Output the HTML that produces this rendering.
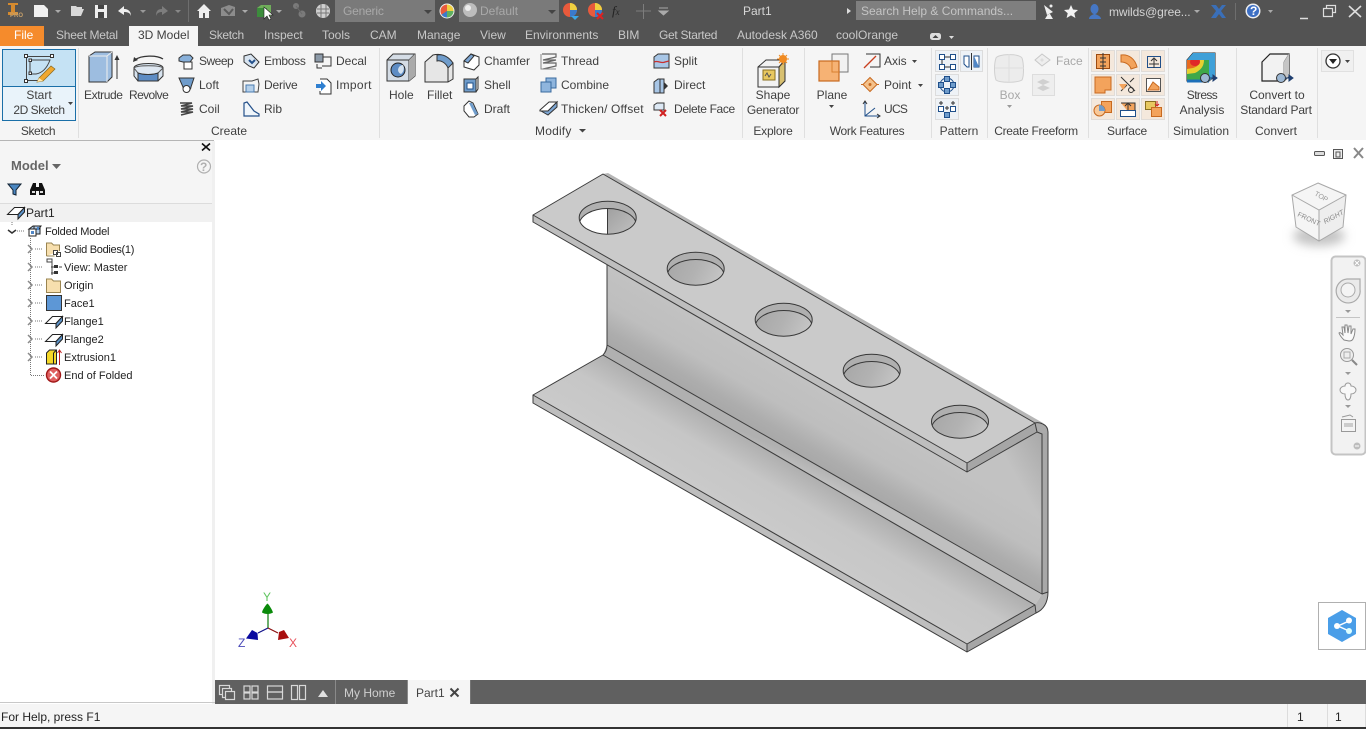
<!DOCTYPE html>
<html><head><meta charset="utf-8"><title>Part1</title>
<style>
html,body{margin:0;padding:0;width:1366px;height:729px;overflow:hidden;background:#fff}
body{position:relative;font:12px/14px "Liberation Sans",sans-serif;color:#3f3f3f}
.b{position:absolute}
.t{position:absolute;white-space:nowrap;line-height:14px}
.c{transform:translateX(-50%)}
.q{color:#a9a9a9}.w{color:#c8c8c8}.d{color:#b4b4b4}
.r{color:#222;font-size:11px}
svg{position:absolute;left:0;top:0}
</style></head><body>
<!-- chrome blocks -->
<div class="b" style="left:0;top:0;width:1366px;height:46px;background:#535353"></div>
<div class="b" style="left:335px;top:0;width:100px;height:22px;background:#7a7a7a"></div>
<div class="b" style="left:459px;top:0;width:100px;height:22px;background:#7a7a7a"></div>
<div class="b" style="left:856px;top:1px;width:180px;height:19px;background:#7f7f7f"></div>
<div class="b" style="left:0;top:26px;width:44px;height:20px;background:#f58b2c"></div>
<div class="b" style="left:129px;top:26px;width:69px;height:20px;background:#f5f5f5"></div>
<div class="b" style="left:0;top:46px;width:1366px;height:94px;background:#f5f5f5"></div>
<div class="b" style="left:0;top:140px;width:214px;height:1px;background:#b5b5b5"></div>
<div class="b" style="left:0;top:141px;width:212px;height:63px;background:#f5f5f5"></div>
<div class="b" style="left:0;top:203px;width:212px;height:1px;background:#dcdcdc"></div>
<div class="b" style="left:0;top:204px;width:212px;height:18px;background:#f1f1f1"></div>
<div class="b" style="left:212px;top:141px;width:3px;height:563px;background:#f0f0f0"></div>
<div class="b" style="left:0;top:702px;width:215px;height:1px;background:#c8c8c8"></div>
<div class="b" style="left:215px;top:680px;width:1151px;height:24px;background:#606060"></div>
<div class="b" style="left:408px;top:680px;width:62px;height:24px;background:#f5f5f5"></div>
<div class="b" style="left:0;top:704px;width:1366px;height:23px;background:#f5f5f5"></div>
<div class="b" style="left:0;top:727px;width:1366px;height:2px;background:#333"></div>

<svg width="1366" height="729" viewBox="0 0 1366 729" fill="none">
<defs>
<linearGradient id="web" gradientUnits="userSpaceOnUse" x1="800" y1="376" x2="765.5" y2="436">
<stop offset="0" stop-color="#c2c2c2"/><stop offset=".5" stop-color="#bebebe"/><stop offset=".82" stop-color="#adadad"/><stop offset="1" stop-color="#a8a8a8"/></linearGradient>
<linearGradient id="bend" gradientUnits="userSpaceOnUse" x1="800" y1="456" x2="794" y2="470">
<stop offset="0" stop-color="#b0b0b0"/><stop offset="1" stop-color="#c0c0c0"/></linearGradient>
<linearGradient id="flg" gradientUnits="userSpaceOnUse" x1="800" y1="470" x2="765" y2="530">
<stop offset="0" stop-color="#b0b0b0"/><stop offset=".4" stop-color="#c6c6c6"/><stop offset="1" stop-color="#cacaca"/></linearGradient>
<linearGradient id="webr" gradientUnits="userSpaceOnUse" x1="1040" y1="438" x2="1005" y2="458">
<stop offset="0" stop-color="#000" stop-opacity=".12"/><stop offset="1" stop-color="#000" stop-opacity="0"/></linearGradient>
<linearGradient id="hole" x1="0" y1="0" x2="1" y2=".3"><stop offset="0" stop-color="#a6a6a6"/><stop offset=".55" stop-color="#b2b2b2"/><stop offset="1" stop-color="#c4c4c4"/></linearGradient>
<linearGradient id="hole2" x1="0" y1="0" x2="1" y2="1"><stop offset="0" stop-color="#a0a0a0"/><stop offset="1" stop-color="#c2c2c2"/></linearGradient>
<filter id="bl" x="-40%" y="-60%" width="180%" height="220%"><feGaussianBlur stdDeviation="5"/></filter>
<clipPath id="hc1"><ellipse cx="607.7" cy="217.7" rx="28.5" ry="16.5"/></clipPath>
<clipPath id="hc2"><ellipse cx="695.7" cy="268.7" rx="28.5" ry="16.5"/></clipPath>
<clipPath id="hc3"><ellipse cx="783.7" cy="319.7" rx="28.5" ry="16.5"/></clipPath>
<clipPath id="hc4"><ellipse cx="871.7" cy="370.7" rx="28.5" ry="16.5"/></clipPath>
<clipPath id="hc5"><ellipse cx="960" cy="421.7" rx="28.5" ry="16.5"/></clipPath>
<g id="fl"><path d="M.5 8.500 7.500 1.500H17.500L11 8.500z" fill="#fff" stroke="#222"/><path d="M17.500 1.500V6L11 13V8.500z" fill="#5d93c9" stroke="#222"/></g>
<g id="car"><path d="M0 0h6l-3 3z" fill="currentColor"/></g>
</defs>

<!-- PART -->
<g stroke-linejoin="round">
<path d="M607 262 1043 430V594L607 345z" fill="url(#web)"/>
<path d="M607 262 1043 430V594L607 345z" fill="url(#webr)"/>
<path d="M607 345 1042 594 1035 605 603 355z" fill="url(#bend)"/>
<path d="M533 395 603 355 1035 605 967 644z" fill="url(#flg)"/>
<path d="M533 395 967 644V652L533 403z" fill="#bebebe"/>
<path d="M967 644 1035 605 1036 613 967 652z" fill="#a6a6a6"/>
<path d="M1035 605 1042 594 1048 592C1048 604 1043 610 1036 613z" fill="#b4b4b4"/>
<path d="M1042 432H1048V592L1042 594z" fill="#a8a8a8"/>
<path d="M603 174 608 173 1043 423 1035 423z" fill="#b6b6b6"/>
<path d="M533 215 603 174 1035 423 967 463z" fill="#cacaca"/>
<path d="M533 215 967 463V472L533 222z" fill="#bebebe"/>
<path d="M967 463 1035 423 1037 432 967 472z" fill="#a6a6a6"/>
<path d="M1035 423C1038 422 1041 423 1043 424 1047 426 1048 429 1048 432L1042 434 1037 432z" fill="#aaa"/>
<!-- holes -->
<g clip-path="url(#hc1)"><rect x="575" y="198" width="64" height="40" fill="#b0b0b0"/><ellipse cx="607.7" cy="225" rx="28.5" ry="16.5" fill="#fff"/><path d="M607.500 208.500A28.500 16.500 0 0 1 636 225V236H607.500z" fill="url(#hole2)"/></g>
<g stroke="#383838" stroke-width="1">
<ellipse cx="607.7" cy="217.7" rx="28.5" ry="16.5"/>
<g clip-path="url(#hc1)"><ellipse cx="607.7" cy="225" rx="28.5" ry="16.5"/></g>
<path d="M607.500 209V234"/>
</g>
<g><ellipse cx="695.7" cy="268.7" rx="28.5" ry="16.5" fill="#afafaf"/><g clip-path="url(#hc2)"><ellipse cx="695.7" cy="276" rx="28.5" ry="16.5" fill="url(#hole)" stroke="#383838"/></g><ellipse cx="695.7" cy="268.7" rx="28.5" ry="16.5" stroke="#383838"/></g>
<g><ellipse cx="783.7" cy="319.7" rx="28.5" ry="16.5" fill="#afafaf"/><g clip-path="url(#hc3)"><ellipse cx="783.7" cy="327" rx="28.5" ry="16.5" fill="url(#hole)" stroke="#383838"/></g><ellipse cx="783.7" cy="319.7" rx="28.5" ry="16.5" stroke="#383838"/></g>
<g><ellipse cx="871.7" cy="370.7" rx="28.5" ry="16.5" fill="#afafaf"/><g clip-path="url(#hc4)"><ellipse cx="871.7" cy="378" rx="28.5" ry="16.5" fill="url(#hole)" stroke="#383838"/></g><ellipse cx="871.7" cy="370.7" rx="28.5" ry="16.5" stroke="#383838"/></g>
<g><ellipse cx="960" cy="421.7" rx="28.5" ry="16.5" fill="#afafaf"/><g clip-path="url(#hc5)"><ellipse cx="960" cy="429" rx="28.5" ry="16.5" fill="url(#hole)" stroke="#383838"/></g><ellipse cx="960" cy="421.7" rx="28.5" ry="16.5" stroke="#383838"/></g>
<!-- edges -->
<g stroke="#3c3c3c" stroke-width="1">
<path d="M533 215 603 174 1035 423 967 463zM533 215V222L967 472V463M967 472 1037 432 1035 423"/>
<path d="M1035 423C1038 422 1041 423 1043 424 1047 426 1048 429 1048 432V592C1048 603 1043 610 1036 613L967 652V644L533 395V403L967 652"/>
<path d="M533 395 603 355 1035 605 967 644M1035 605 1036 613"/>
<path d="M607 265V345C607 350 605 353 603 355M607 345 1042 594V434L1037 432M1042 594 1048 592"/>
</g>
</g>

<!-- QAT -->
<path d="M8 3h10v2h-3v7h3v3H8v-3h3V5H8z" fill="#d58a2e"/>
<path d="M34 5h10l4 4v8H34z" fill="#f0f0f0"/>
<use href="#car" x="55" y="10" color="#aaa"/>
<path d="M71 9V6h5l1 1h5v2h2l-3 7H71z" fill="#d8d8d8"/>
<path d="M95 5h12v13H95z" fill="#eee"/><path d="M98 5h6v4h-6zM98 12h6v6h-6z" fill="#444"/>
<path d="M124 6 118 11l6 4v-3c4 0 6 1 7 4 0-4-2-7-7-7z" fill="#eee"/>
<use href="#car" x="140" y="10" color="#999"/>
<path d="M162 6 168 11l-6 4v-3c-3 0-5 1-6 4 0-4 1-7 6-7z" fill="#7d7d7d"/>
<use href="#car" x="175" y="10" color="#888"/>
<path d="M188.500 0V22" stroke="#6e6e6e"/>
<path d="M204 4 197 11h2v7h4v-5h2v5h4v-7h2z" fill="#eee"/>
<path d="M221 8l8-3 6 2v9h-14z" fill="#8c8c8c"/><path d="M224 9l5 5 4-5" stroke="#5a5a5a" stroke-width="2"/>
<use href="#car" x="242" y="10" color="#aaa"/>
<path d="M257 8l4-3h10v11h-14z" fill="#6fae5a"/><path d="M257 8h10v9h-10z" fill="#3c8c3c"/>
<path d="M264 7v12l3-3 2 4 2-1-2-4h4z" fill="#fff" stroke="#222" stroke-width=".6"/>
<use href="#car" x="276" y="10" color="#aaa"/>
<circle cx="296" cy="6" r="3" fill="#7a7a7a"/><circle cx="302" cy="14" r="3.500" fill="#7a7a7a"/><path d="M296 6 302 14" stroke="#6a6a6a"/>
<circle cx="323" cy="11" r="7" fill="#cfcfcf"/><path d="M317 9h12M317 13h12M321 4v14M326 4v14" stroke="#777"/>
<path d="M424 10h8l-4 4z" fill="#444"/><path d="M548 10h8l-4 4z" fill="#444"/>
<circle cx="447" cy="11" r="7" fill="#e85a3c"/><path d="M447 11V4a7 7 0 0 1 7 7z" fill="#f0d040"/><path d="M447 11h7a7 7 0 0 1-7 7z" fill="#60b060"/><path d="M447 11v7a7 7 0 0 1-6-3z" fill="#3a7acc"/><circle cx="447" cy="11" r="7" stroke="#eee"/>
<circle cx="470" cy="10" r="7" fill="#bdbdbd"/><circle cx="468" cy="8" r="3" fill="#eee"/>
<circle cx="570" cy="10" r="7" fill="#e85a3c"/><path d="M570 10V3a7 7 0 0 1 7 7z" fill="#f0d040"/><path d="M570 10h7a7 7 0 0 1-7 7z" fill="#3a7acc"/><path d="M571 16h8l-4 4z" fill="#3aa7e8"/>
<circle cx="595" cy="10" r="7" fill="#e85a3c"/><path d="M595 10V3a7 7 0 0 1 7 7z" fill="#f0d040"/><path d="M595 10h7a7 7 0 0 1-7 7z" fill="#3a7acc"/><path d="M597 13l6 6m0-6-6 6" stroke="#e02020" stroke-width="2"/>
<path d="M636 11h15M643.500 4v15" stroke="#7d7d7d"/>
<path d="M659 8h9M659 11h9l-4.500 4z" stroke="#aaa" fill="#aaa" stroke-width="1"/>
<path d="M847 8v6l4-3z" fill="#ddd"/>
<path d="M1044 5l9 7-6 3zM1048 14l-3 5h8l-3-5z" fill="#eee"/><circle cx="1051" cy="6" r="1.500" fill="#eee"/>
<path d="M1071 5l2 4.500 5 .5-3.700 3.200 1.100 4.800-4.400-2.600-4.400 2.600 1.100-4.800-3.700-3.200 5-.5z" fill="#f2f2f2"/>
<path d="M1089 19c0-3 3-4 5-5a4 5 0 1 1 1 0c2 1 6 2 6 5z" fill="#4677c4"/>
<path d="M1194 10h6l-3 3z" fill="#aaa"/>
<path d="M1211 5h5l3 4 3-4h4l-5 6 5 7h-4l-3-4-3 4h-5l5-7z" fill="#3a6fb8"/>
<path d="M1235.500 3V20" stroke="#6e6e6e"/>
<circle cx="1253" cy="11" r="7.500" fill="#f0f0f0"/><circle cx="1253" cy="11" r="6" fill="#3d6fc4"/>
<path d="M1268 10h5l-2.500 3z" fill="#aaa"/>
<path d="M1300 18.500h8" stroke="#ddd" stroke-width="1.500"/>
<path d="M1323.500 8.500h9v8h-9zM1326.500 8.500V5.500h9v7h-3" stroke="#ddd" stroke-width="1.200"/>
<path d="M1349 6l12 11m0-11-12 11" stroke="#ddd" stroke-width="1.600"/>
<rect x="930" y="33" width="11" height="7" rx="2.500" fill="#ddd"/><path d="M932.500 38h6l-3-3z" fill="#444"/>
<path d="M949 36h5l-2.500 3z" fill="#ddd"/>

<!-- Start 2D sketch -->
<rect x="2.500" y="49.500" width="73" height="71" fill="#e9f3fa" stroke="#1a6fa8"/>
<rect x="3" y="50" width="72" height="36" fill="#c5e2f4"/>
<path d="M2 86.500h74" stroke="#1a6fa8"/>
<path d="M26.500 56.500h26M26.500 56.500v24M26.500 80.500h14" stroke="#444"/>
<path d="M30 60v14h6c6-1 11-6 14-14z" stroke="#444"/>
<g fill="#fff" stroke="#333"><rect x="24.500" y="54.500" width="3" height="3"/><rect x="50.500" y="54.500" width="3" height="3"/><rect x="24.500" y="79.500" width="3" height="3"/><rect x="29" y="59" width="2.500" height="2.500"/><rect x="29" y="72" width="2.500" height="2.500"/></g>
<path d="M39 78l12-12 4 3-12 12-6 1z" fill="#f0a830" stroke="#8a6a20" stroke-width=".7"/><path d="M37 82l2-4 4 3z" fill="#ffe8b0"/>
<path d="M68 102h5l-2.500 3z" fill="#444"/>
<!-- Extrude -->
<path d="M89 56l6-4h17v25l-5 5H89z" fill="#9dbde0" stroke="#333"/><path d="M89 56h18v26M107 56l5-4" stroke="#eee"/>
<path d="M117 79V58" stroke="#333"/><path d="M114.500 60l2.500-5 2.500 5z" fill="#333"/>
<!-- Revolve -->
<path d="M135 60c6-5 22-5 28-1" stroke="#333" stroke-width="1.300"/><path d="M133 62l1-5 4 3z" fill="#333"/>
<path d="M134 68c0-6 29-6 29 0v8l-5 5h-20l-4-5z" fill="#d8e4f0" stroke="#333"/>
<path d="M134 68c3-3 26-3 29 0l-5 5c-4 2-15 2-20 0z" fill="#dfe8f2" stroke="#555"/>
<path d="M138 73c5 2 15 2 20 0v8h-20z" fill="#5d8cc4" stroke="#333"/>
<!-- small left icons -->
<path d="M179 58l4-3h7l3 3-3 4h-7l-4-1z" fill="#88b0da" stroke="#333"/><path d="M184 62h8v7h-8z" fill="#fff" stroke="#333"/>
<path d="M179 78h15l-3 9a4 4 0 1 1-8 0z" fill="#6f9ccb" stroke="#333"/><circle cx="186.500" cy="89" r="3.500" fill="#fff" stroke="#333"/>
<path d="M180 103h12l-11 3h12l-12 3h12l-12 3h12l-12 3" stroke="#444" stroke-width="1.500"/>
<path d="M244 56l7-2 8 8-5 6-5-2-5-4z" fill="#d8e4f0" stroke="#333"/><path d="M249 60l3 3 3-3" stroke="#24508a" stroke-width="2"/>
<path d="M243 81h9l6-2 1 5-1 8h-15z" fill="#f4f4f4" stroke="#444"/><rect x="246" y="85" width="8" height="7" fill="#b5d0ea" stroke="#4a7bb0"/>
<path d="M244 116V103l3-1 7 9 5 3 0 2z" fill="#f0f6fb" stroke="#24508a" stroke-width="1.200"/>
<rect x="315" y="54" width="8" height="8" fill="#8c9aa8" stroke="#333"/><path d="M323 57h8v9h-9M317 64v4h5" stroke="#333"/>
<path d="M320 79h7l4 4v11h-11v-3" fill="#fff" stroke="#333"/><path d="M316 84h5v-3l5 5-5 5v-3h-5z" fill="#2f7fd0"/>
<!-- Hole -->
<path d="M387 60l6-6h22v22l-6 5h-22z" fill="#d5dde6" stroke="#333"/><path d="M387 60h22v21M409 60l6-6" stroke="#333"/><path d="M409 60l6-6v22l-6 5z" fill="#aaa"/>
<circle cx="398" cy="70" r="7" fill="#5d8cc4" stroke="#222"/><path d="M398 70a5 5 0 0 1 5-5 7 7 0 0 1-2 9 5 5 0 0 1-3-4z" fill="#d4e2f0"/>
<!-- Fillet -->
<path d="M425 62l8-7c8-2 12 0 20 8v16l-5 3h-23z" fill="#e6e6e6" stroke="#333"/>
<path d="M437 55c6-1 11 1 16 8l-5 5c-2-5-7-8-11-7z" fill="#6f9ccb" stroke="#333"/><path d="M448 68v14M453 63v16" stroke="#333"/>
<!-- modify column -->
<path d="M464 61l7-7 8 3v8l-5 5-10-3z" fill="#fff" stroke="#333"/><path d="M464 61l7-7 3 2-6 7z" fill="#7ea7d4" stroke="#333"/>
<rect x="464" y="79" width="12" height="13" fill="#6f9ccb" stroke="#333"/><rect x="467" y="83" width="6" height="6" fill="#fff" stroke="#1f4f8a"/><path d="M476 79l2-2v12l-2 3" stroke="#333"/>
<path d="M464 106l5-5 4 2 5 11-4 3h-5l-5-6z" fill="#fff" stroke="#333"/><path d="M469 103l6 12 3-1-6-11z" fill="#6f9ccb"/>
<path d="M542 54h14v3l-13 3h13l-13 3h13v3l-13 3" stroke="#666" stroke-width="1.200"/><path d="M541 54v15h15" stroke="#888"/>
<rect x="546" y="78" width="10" height="10" fill="#8fb5dd" stroke="#3a6a9f"/><rect x="541" y="82" width="10" height="10" fill="#8fb5dd" stroke="#3a6a9f"/>
<path d="M540 110l9-8h8l-9 9h-8z" fill="#fff" stroke="#333"/><path d="M541 111l7 4 9-8v-5l-9 9z" fill="#7ea7d4" stroke="#333"/>
<path d="M654 57l4-3h11v14h-15z" fill="#a8c6e6" stroke="#333"/><path d="M654 62c4-2 7 2 11 0l4-1" stroke="#c83030" stroke-width="1.300"/>
<path d="M654 82l4-3h6v14h-10z" fill="#a8c6e6" stroke="#333"/><path d="M660 79v14" stroke="#333"/><path d="M664 82l4 4-4 4z" fill="#333"/>
<path d="M654 105l3-2h7v7h-10z" fill="#dce8f4" stroke="#333"/><path d="M660 110l6 6m0-6-6 6" stroke="#d02020" stroke-width="2"/>
<path d="M579 129h7l-3.500 3.500z" fill="#444"/>
<!-- Shape generator -->
<path d="M758 67l8-7h19v21l-6 6h-21z" fill="#f2f2f2" stroke="#333"/><path d="M758 67h21v20M779 67l6-7" stroke="#333"/>
<rect x="763" y="70" width="12" height="10" fill="#e8c860" stroke="#8a7020"/><path d="M765 76l2-3 2 4 2-3" stroke="#555"/><path d="M779 67l6-7v21l-6 6z" fill="#d8c070" stroke="#333"/>
<circle cx="783" cy="59" r="4" fill="#f08a20"/><path d="M783 53v12M777 59h12M779 55l8 8M787 55l-8 8" stroke="#f08a20"/>
<!-- Plane -->
<rect x="832" y="54" width="16" height="18" fill="#f2f2f2" stroke="#777"/>
<rect x="819" y="61" width="20" height="20" fill="#f6b274" stroke="#c86a20" stroke-width="1.200"/>
<path d="M832 61v11h7" stroke="#d88030"/>
<path d="M829 105h5l-2.500 3z" fill="#444"/>
<!-- work features -->
<path d="M866 54h14v13h-10" stroke="#333"/><path d="M864 68l12-12" stroke="#c84020" stroke-width="1.300"/>
<path d="M912 60h5l-2.500 3z" fill="#444"/>
<path d="M863 84.500l7-7 7 7-7 7z" fill="#f4c18a" stroke="#c86a20"/><circle cx="870" cy="84.500" r="1.500" fill="#c86a20"/><path d="M863 84.500h-2M877 84.500h2" stroke="#c86a20"/>
<path d="M918 84h5l-2.500 3z" fill="#444"/>
<path d="M865 102v14h14M865 116l10-8" stroke="#1f4f8a"/><path d="M863 104l2-3 2 3M877 114l3 2-3 2" stroke="#333"/>
<!-- pattern -->
<g stroke="#dcdcdc" fill="#eef2f6"><rect x="935.500" y="50.500" width="23" height="21"/><rect x="960.500" y="50.500" width="22" height="21"/><rect x="935.500" y="74.500" width="23" height="21"/><rect x="935.500" y="98.500" width="23" height="21"/></g>
<g stroke="#1f4f8a" fill="#fff"><rect x="939.500" y="54.500" width="5" height="5"/><rect x="950.500" y="54.500" width="5" height="5"/><rect x="939.500" y="64.500" width="5" height="5"/><rect x="950.500" y="64.500" width="5" height="5"/></g>
<path d="M944.500 57h6M942 60v4M944.500 67h6" stroke="#333"/>
<path d="M971.500 53v17" stroke="#333"/><path d="M964 56h5v11h-2l-3-3zM974 56l5 0v11h-5z" stroke="#1f4f8a" fill="#fff"/><path d="M974 56l5 11h-5z" fill="#4f86c6"/>
<circle cx="947" cy="85" r="7" stroke="#1f4f8a"/><g fill="#6f9ccb" stroke="#1f4f8a"><rect x="944.500" y="76.500" width="5" height="5"/><rect x="944.500" y="88.500" width="5" height="5"/><rect x="938.500" y="82.500" width="5" height="5"/><rect x="950.500" y="82.500" width="5" height="5"/></g>
<g stroke="#1f4f8a" fill="#fff"><rect x="938.500" y="106.500" width="5" height="5"/><rect x="950.500" y="106.500" width="5" height="5"/><rect x="944.500" y="112.500" width="5" height="5" fill="#6f9ccb"/></g><path d="M941 101v4M939 103h4M953 101v4M951 103h4M947 106v4M945 108h4" stroke="#333"/>
<!-- freeform -->
<path d="M996 58c2-4 22-5 26 0 2 6 2 18 0 22-5 3-22 3-26 0-2-6-2-16 0-22z" fill="#ececec" stroke="#d0d0d0"/><path d="M1009 54v28M995 68h29" stroke="#dedede"/>
<path d="M1007 105h5l-2.500 3z" fill="#9a9a9a"/>
<path d="M1035 60l7-6 8 6-8 6z" stroke="#c8c8c8" fill="#eee"/><path d="M1040 60l2-2 2 2-2 2z" fill="#ddd"/>
<rect x="1032.500" y="74.500" width="22" height="21" fill="#eee" stroke="#ddd"/><path d="M1037 82l6-3 7 3-7 3zM1037 88l6-3 7 3-7 3z" fill="#d0d0d0"/>
<!-- surface -->
<g fill="#f4e8dc" stroke="#e0dcd8"><rect x="1091.500" y="50.500" width="23" height="21"/><rect x="1116.500" y="50.500" width="23" height="21"/><rect x="1141.500" y="50.500" width="23" height="21"/><rect x="1091.500" y="74.500" width="23" height="21"/><rect x="1116.500" y="74.500" width="23" height="21"/><rect x="1141.500" y="74.500" width="23" height="21"/><rect x="1091.500" y="98.500" width="23" height="21"/><rect x="1116.500" y="98.500" width="23" height="21"/><rect x="1141.500" y="98.500" width="23" height="21"/></g>
<rect x="1096.500" y="54.500" width="13" height="14" fill="#f3a35c" stroke="#9c4a10"/><path d="M1103 53v17M1100 58h6M1100 62h6M1100 66h6" stroke="#333"/>
<path d="M1121 55c8-1 14 4 16 12l-6 2c-1-4-5-7-10-7z" fill="#f3a35c" stroke="#c86a20"/>
<rect x="1147.500" y="56.500" width="13" height="11" fill="none" stroke="#1f4f8a"/><path d="M1154 68v-9M1151 61l3-3 3 3M1149 64h10" stroke="#333"/>
<path d="M1095 77h16v13h-6v3h-10z" fill="#f3a35c" stroke="#c86a20"/>
<path d="M1121 77l14 14M1121 91l6-6m3-3 4-4" stroke="#333"/><circle cx="1131" cy="90" r="2.500" stroke="#333"/><path d="M1119 84h8l-4 6z" fill="#f3a35c"/>
<rect x="1146.500" y="78.500" width="14" height="13" stroke="#555" fill="#fff"/><path d="M1148 90l5-8 6 5v3z" fill="#f3a35c" stroke="#c86a20"/>
<rect x="1101.500" y="101.500" width="10" height="11" fill="#f3a35c" stroke="#c86a20"/><circle cx="1099.500" cy="110.500" r="5.500" fill="#f8c898" stroke="#c86a20"/><path d="M1099 105a5.500 5.500 0 0 1 6 6h-6z" fill="#6f9ccb"/>
<path d="M1121 103h14v11h-5M1128 112v-8M1125 106l3-3 3 3" stroke="#333" fill="#f3a35c"/><rect x="1120.500" y="110.500" width="15" height="6" fill="#fff" stroke="#1f4f8a"/>
<rect x="1145.500" y="101.500" width="10" height="8" fill="#e8c860" stroke="#8a7020"/><rect x="1151.500" y="107.500" width="10" height="9" fill="#f3a35c" stroke="#c86a20"/><path d="M1157 101v5M1155 104l2 2 2-2" stroke="#d02020"/>
<!-- stress -->
<path d="M1187 60l6-7h22v23l-6 5h-22z" fill="#1c6fb8" stroke="#222"/>
<path d="M1187 60h22v21h-22z" fill="#3ea84a"/><path d="M1187 60h17c0 6-3 10-9 13l-8 1z" fill="#e8d030"/><path d="M1187 60h13c0 4-3 7-7 8l-6 1z" fill="#e86a20"/><ellipse cx="1195" cy="62" rx="5" ry="4" fill="#e02828"/>
<path d="M1209 60l6-7v23l-6 5zM1193 53h22l-6 7h-22z" fill="#3fa0d8"/><path d="M1187 81h22" stroke="#1c6fb8" stroke-width="3"/>
<circle cx="1205" cy="78" r="4.500" fill="#9db8d4" stroke="#333"/><path d="M1209 78h6M1213 75l4 3-4 3z" fill="#1f3f70" stroke="#1f3f70"/>
<!-- convert -->
<path d="M1262 62l8-8h19v22l-5 5h-22z" fill="#f2f2f2" stroke="#222" stroke-width="1.200"/><path d="M1284 62v19M1284 62l5-8" stroke="#888"/><path d="M1284 62l5-8v22l-5 5z" fill="#c5c5c5"/>
<circle cx="1281" cy="78" r="4.500" fill="#9db8d4" stroke="#333"/><path d="M1285 78h6M1289 75l4 3-4 3z" fill="#1f3f70" stroke="#1f3f70"/>
<!-- end -->
<rect x="1321.500" y="50.500" width="32" height="21" fill="#f0f0f0" stroke="#e0e0e0"/>
<circle cx="1333" cy="61" r="7" stroke="#333" stroke-width="1.300" fill="#fff"/><path d="M1329 59h8l-4 5z" fill="#222"/><path d="M1345 60h5l-2.500 3z" fill="#444"/>
<!-- ribbon separators -->
<g stroke="#dfdfdf"><path d="M78.500 48V138M379.500 48V138M742.500 48V138M804.500 48V138M931.500 48V138M987.500 48V138M1088.500 48V138M1168.500 48V138M1236.500 48V138M1317.500 48V138"/></g>

<!-- Browser -->
<path d="M202 143.500l8 7m0-7-8 7" stroke="#111" stroke-width="1.600"/>
<path d="M52 164h9l-4.500 5z" fill="#666"/>
<circle cx="204" cy="166.500" r="6.500" stroke="#b0b0b0" stroke-width="1.200"/>
<path d="M8 184h13l-5 6v5l-3-1v-4z" fill="#4a86c0" stroke="#123" stroke-width="1"/>
<path d="M30 195v-5l3-7h3v4h3v-4h3l3 7v5h-6v-4h-3v4z" fill="#111"/><path d="M32 191h3v2h-3zM40 191h3v2h-3z" fill="#ddd"/>
<use href="#fl" x="7" y="206"/>
<!-- tree lines -->
<g stroke="#777" stroke-dasharray="1 1">
<path d="M30.500 238V375.500H44M35 249h8M35 267h8M35 285h8M35 303h8M35 321h8M35 339h8M35 357h8M17 231h8M12 222V226"/>
</g>
<g stroke-width="1.500"><path d="M8 230l4 3 4-3" stroke="#333"/><path d="M28 245l4 4-4 4M28 263l4 4-4 4M28 281l4 4-4 4M28 299l4 4-4 4M28 317l4 4-4 4M28 335l4 4-4 4M28 353l4 4-4 4" stroke="#8a8a8a"/></g>
<path d="M29 229l4-3h7v8h-9v-5zM34 226h7l-2 3h-5z" fill="#b6cfe8" stroke="#222"/><path d="M29 229h7v7h-7z" fill="#fff" stroke="#222"/><path d="M31 231h3v3h-3zM37 227h2v3h-2z" fill="#4f86c6"/>
<path d="M46.500 256V243h5l2 2h6v6" fill="#f7dfae" stroke="#9a8450"/><path d="M46.500 256h8" stroke="#9a8450"/><rect x="53.500" y="250.500" width="4" height="4" stroke="#444" fill="#fff"/><rect x="56.500" y="252.500" width="4" height="4" stroke="#444"/>
<path d="M47 259h5v3h-5zM51 267h3M51 273h3M52 262v13" stroke="#444"/><rect x="54" y="265" width="4" height="3" fill="#333"/><rect x="54" y="271" width="4" height="3" fill="#333"/><path d="M59 267h3" stroke="#444"/>
<path d="M46.500 292.500V279h5l2 2h7v11.500z" fill="#f7dfae" stroke="#9a8450"/>
<rect x="46.500" y="295.500" width="15" height="15" fill="#5d97d6" stroke="#333"/>
<use href="#fl" x="45" y="315"/><use href="#fl" x="45" y="333"/>
<path d="M46.500 353l3-3h7v14h-10z" fill="#f5d828" stroke="#222"/><path d="M53.500 353v11M53.500 353l3-3" stroke="#222"/><path d="M59.500 365V351M57.500 353l2-3 2 3" stroke="#c02020"/>
<circle cx="53.500" cy="375" r="7" fill="#e06060" stroke="#a01818" stroke-width="1.400"/><path d="M50 371.500l7 7m0-7-7 7" stroke="#fff" stroke-width="1.800"/>

<!-- viewport controls -->
<rect x="1314.500" y="151.500" width="10" height="4" stroke="#555" rx="1" fill="#ddd"/>
<rect x="1333.500" y="149.500" width="9" height="9" stroke="#555" fill="#eee"/><rect x="1336" y="152" width="4" height="5" stroke="#555"/>
<path d="M1354 148l9 10m0-10-9 10" stroke="#888" stroke-width="2"/>
<!-- View cube -->
<ellipse cx="1319" cy="236" rx="26" ry="10" fill="#c4c4c4" filter="url(#bl)"/>
<path d="M1318 183l28 12-3 32-24 14-23-14-4-32z" fill="#f5f5f5"/>
<path d="M1319 210l27-15-3 32-24 14z" fill="#eeeeee"/>
<path d="M1292 195l27 15 27-15M1319 210v31" stroke="#a8a8a8"/>
<path d="M1318 183l28 12-3 32-24 14-23-14-4-32z" stroke="#a8a8a8"/>
<text transform="translate(1314 195) rotate(30)" font-family="Liberation Sans" font-size="7" fill="#999">TOP</text>
<text transform="translate(1297 216) rotate(25)" font-family="Liberation Sans" font-size="7" fill="#888">FRONT</text>
<text transform="translate(1325 224) rotate(-28)" font-family="Liberation Sans" font-size="7" font-style="italic" fill="#888">RIGHT</text>
<!-- Nav bar -->
<rect x="1331.500" y="256.500" width="34" height="198" rx="4" fill="#f2f2f2" stroke="#c4c4c4" stroke-width="2"/>
<circle cx="1357" cy="263" r="3.500" fill="#bdbdbd"/><path d="M1355 261l4 4m0-4-4 4" stroke="#fff"/>
<path d="M1347 279h13v10a12 12 0 1 1-13-10z" fill="#eaeaea" stroke="#aaa" stroke-width="1.200"/><circle cx="1348" cy="290" r="7" stroke="#aaa" fill="#f4f4f4"/>
<path d="M1345 310h6l-3 3z" fill="#999"/><path d="M1336 317.500h24" stroke="#c4c4c4"/>
<path d="M1344 340c-2-2-4-4-5-7 1-1 2 0 4 2l-1-8 2 0 1 6 0-8h2l1 8 1-7h2l0 8 2-5h2c0 4-1 8-2 10-1 2-3 2-4 2z" stroke="#888" fill="#fafafa"/>
<circle cx="1347" cy="355" r="6.500" stroke="#999" fill="#eee"/><rect x="1344" y="352" width="6" height="6" stroke="#aaa"/><path d="M1352 360l5 5" stroke="#888" stroke-width="2"/>
<path d="M1345 372h6l-3 3z" fill="#999"/>
<path d="M1348 383c3 0 3 3 3 3 3 0 5 2 5 4s-2 4-5 4c0 3-1 6-3 6s-3-3-3-6c-3 0-5-2-5-4s2-4 5-4c0 0 0-3 3-3z" stroke="#999" fill="#f8f8f8"/>
<path d="M1345 405h6l-3 3z" fill="#999"/>
<rect x="1341.500" y="419.500" width="14" height="12" stroke="#999" fill="#f4f4f4"/><rect x="1344" y="423" width="9" height="4" fill="#ccc"/><path d="M1342 417l8-2 3 2" stroke="#999"/>
<circle cx="1357" cy="446" r="3.500" fill="#bdbdbd"/><path d="M1355 446h4" stroke="#fff"/>
<!-- Triad -->
<path d="M268 628V610" stroke="#0a7a0a" stroke-width="1.200"/>
<path d="M262 612.500c0-2 4-8 5.500-9 1.500 1 5 7 5.500 9-3 2-8 2-11 0z" fill="#0a8a0a"/>
<path d="M268 628 258 633" stroke="#10108a" stroke-width="1.200"/><path d="M268 628 278 633" stroke="#8a1010" stroke-width="1.200"/>
<path d="M246 638.500 252 630l5.500 3 .5 7z" fill="#0a0aa0"/>
<path d="M278 640l1-8 5-2 5 8z" fill="#a80f0f"/>
<!-- share -->
<rect x="1318.500" y="602.500" width="47" height="47" fill="#fff" stroke="#b0b0b0"/>
<path d="M1342 610l14 8v16l-14 8-14-8v-16z" fill="#4a9ee8"/>
<path d="M1349 621l-11 5 11 5" stroke="#fff" stroke-width="1.500"/><circle cx="1349" cy="620.500" r="3" fill="#fff"/><circle cx="1337" cy="626" r="3" fill="#fff"/><circle cx="1349" cy="631" r="3" fill="#dff"/>
<!-- bottom tab bar -->
<g stroke="#d8d8d8" stroke-width="1.200"><rect x="219.500" y="685.500" width="10" height="9"/><rect x="222.500" y="688.500" width="9" height="9" fill="#606060"/><rect x="225.500" y="691.500" width="9" height="8" fill="#606060"/>
<rect x="244" y="686" width="6" height="6"/><rect x="252" y="686" width="6" height="6"/><rect x="244" y="693" width="6" height="6"/><rect x="252" y="693" width="6" height="6"/>
<rect x="267.500" y="686" width="15" height="6"/><rect x="267.500" y="692" width="15" height="7"/>
<rect x="291.500" y="685.500" width="6" height="14"/><rect x="299.500" y="685.500" width="6" height="14"/></g>
<path d="M318 697l5-7 5 7z" fill="#e0e0e0"/>
<path d="M335.500 680V704M407.500 680V704" stroke="#8a8a8a"/>
<path d="M450.500 688.500l8 8m0-8-8 8" stroke="#444" stroke-width="2"/>
<path d="M470.500 680V704" stroke="#8a8a8a" opacity=".5"/>
<!-- status -->
<path d="M1287.500 704V727M1327.500 704V727M1365.500 704V727" stroke="#dcdcdc"/>
</svg>

<!-- Text -->
<span class="t" style="left:743px;top:4px;color:#d6d6d6">Part1</span>
<span class="t q" style="left:343px;top:4px;letter-spacing:-.2px">Generic</span>
<span class="t q" style="left:480px;top:4px">Default</span>
<span class="t" style="left:612px;top:4px;color:#222;font:italic 13px/14px 'Liberation Serif',serif">f<span style="font-size:9px">x</span></span>
<span class="t" style="left:861px;top:4px;color:#c4c4c4">Search Help &amp; Commands...</span>
<span class="t" style="left:1109px;top:5px;color:#d4d4d4;letter-spacing:-.1px">mwilds@gree...</span>
<span class="t" style="left:1250px;top:4px;color:#fff;font-weight:bold">?</span>
<span class="t" style="left:10px;top:12px;color:#c9a26a;font-size:6px;line-height:8px;font-weight:bold">PRO</span>

<span class="t" style="left:14px;top:28px;color:#fff">File</span>
<span class="t w" style="left:56px;top:28px;letter-spacing:-.2px">Sheet Metal</span>
<span class="t" style="left:138px;top:28px;color:#3f3f3f">3D Model</span>
<span class="t w" style="left:209px;top:28px;letter-spacing:-.3px">Sketch</span>
<span class="t w" style="left:264px;top:28px">Inspect</span>
<span class="t w" style="left:322px;top:28px">Tools</span>
<span class="t w" style="left:370px;top:28px">CAM</span>
<span class="t w" style="left:417px;top:28px">Manage</span>
<span class="t w" style="left:480px;top:28px">View</span>
<span class="t w" style="left:525px;top:28px">Environments</span>
<span class="t w" style="left:618px;top:28px">BIM</span>
<span class="t w" style="left:659px;top:28px;letter-spacing:-.3px">Get Started</span>
<span class="t w" style="left:737px;top:28px">Autodesk A360</span>
<span class="t w" style="left:836px;top:28px">coolOrange</span>

<span class="t c" style="left:39px;top:88px">Start</span>
<span class="t c" style="left:39px;top:103px;letter-spacing:-.45px">2D Sketch</span>
<span class="t c" style="left:38px;top:124px;letter-spacing:-.4px">Sketch</span>
<span class="t" style="left:84px;top:88px;letter-spacing:-.4px">Extrude</span>
<span class="t" style="left:129px;top:88px;letter-spacing:-.6px">Revolve</span>
<span class="t" style="left:199px;top:54px;letter-spacing:-.5px">Sweep</span>
<span class="t" style="left:199px;top:78px">Loft</span>
<span class="t" style="left:199px;top:102px">Coil</span>
<span class="t" style="left:264px;top:54px;letter-spacing:-.3px">Emboss</span>
<span class="t" style="left:264px;top:78px;letter-spacing:-.2px">Derive</span>
<span class="t" style="left:264px;top:102px">Rib</span>
<span class="t" style="left:336px;top:54px">Decal</span>
<span class="t" style="left:336px;top:78px;letter-spacing:.3px">Import</span>
<span class="t c" style="left:229px;top:124px">Create</span>
<span class="t" style="left:389px;top:88px">Hole</span>
<span class="t" style="left:427px;top:88px">Fillet</span>
<span class="t" style="left:484px;top:54px">Chamfer</span>
<span class="t" style="left:484px;top:78px">Shell</span>
<span class="t" style="left:484px;top:102px">Draft</span>
<span class="t" style="left:561px;top:54px">Thread</span>
<span class="t" style="left:561px;top:78px">Combine</span>
<span class="t" style="left:561px;top:102px;letter-spacing:.15px">Thicken/ Offset</span>
<span class="t" style="left:674px;top:54px">Split</span>
<span class="t" style="left:674px;top:78px">Direct</span>
<span class="t" style="left:674px;top:102px;letter-spacing:-.35px">Delete Face</span>
<span class="t" style="left:535px;top:124px;letter-spacing:.2px">Modify</span>
<span class="t c" style="left:773px;top:88px">Shape</span>
<span class="t c" style="left:773px;top:103px;letter-spacing:-.2px">Generator</span>
<span class="t c" style="left:773px;top:124px;letter-spacing:-.2px">Explore</span>
<span class="t c" style="left:832px;top:88px">Plane</span>
<span class="t" style="left:884px;top:54px">Axis</span>
<span class="t" style="left:884px;top:78px">Point</span>
<span class="t" style="left:884px;top:102px;letter-spacing:-.7px">UCS</span>
<span class="t c" style="left:867px;top:124px;letter-spacing:-.3px">Work Features</span>
<span class="t c" style="left:959px;top:124px">Pattern</span>
<span class="t c" style="left:1010px;top:88px;color:#a8a8a8">Box</span>
<span class="t" style="left:1056px;top:54px;color:#a8a8a8">Face</span>
<span class="t c" style="left:1036px;top:124px;letter-spacing:-.3px">Create Freeform</span>
<span class="t c" style="left:1127px;top:124px;letter-spacing:-.2px">Surface</span>
<span class="t c" style="left:1202px;top:88px;letter-spacing:-.6px">Stress</span>
<span class="t c" style="left:1202px;top:103px">Analysis</span>
<span class="t c" style="left:1201px;top:124px">Simulation</span>
<span class="t c" style="left:1277px;top:88px">Convert to</span>
<span class="t c" style="left:1276px;top:103px;letter-spacing:-.2px">Standard Part</span>
<span class="t c" style="left:1276px;top:124px">Convert</span>

<span class="t" style="left:11px;top:159px;font-size:13px;font-weight:bold;color:#666">Model</span>
<span class="t" style="left:200px;top:160px;color:#b0b0b0;font-weight:bold">?</span>
<span class="t" style="left:26px;top:206px;color:#222">Part1</span>
<span class="t r" style="left:45px;top:225px;letter-spacing:-.2px">Folded Model</span>
<span class="t r" style="left:64px;top:243px;letter-spacing:-.3px">Solid Bodies(1)</span>
<span class="t r" style="left:64px;top:261px">View: Master</span>
<span class="t r" style="left:64px;top:279px">Origin</span>
<span class="t r" style="left:64px;top:297px">Face1</span>
<span class="t r" style="left:64px;top:315px">Flange1</span>
<span class="t r" style="left:64px;top:333px">Flange2</span>
<span class="t r" style="left:64px;top:351px">Extrusion1</span>
<span class="t r" style="left:64px;top:369px">End of Folded</span>

<span class="t" style="left:263px;top:590px;color:#5fc55f">Y</span>
<span class="t" style="left:238px;top:636px;color:#4a4ab8">Z</span>
<span class="t" style="left:289px;top:636px;color:#e8505a">X</span>

<span class="t" style="left:344px;top:686px;color:#cfcfcf">My Home</span>
<span class="t" style="left:416px;top:686px;color:#444">Part1</span>
<span class="t" style="left:1px;top:710px;color:#222">For Help, press F1</span>
<span class="t" style="left:1297px;top:710px;color:#222">1</span>
<span class="t" style="left:1335px;top:710px;color:#222">1</span>
</body></html>
